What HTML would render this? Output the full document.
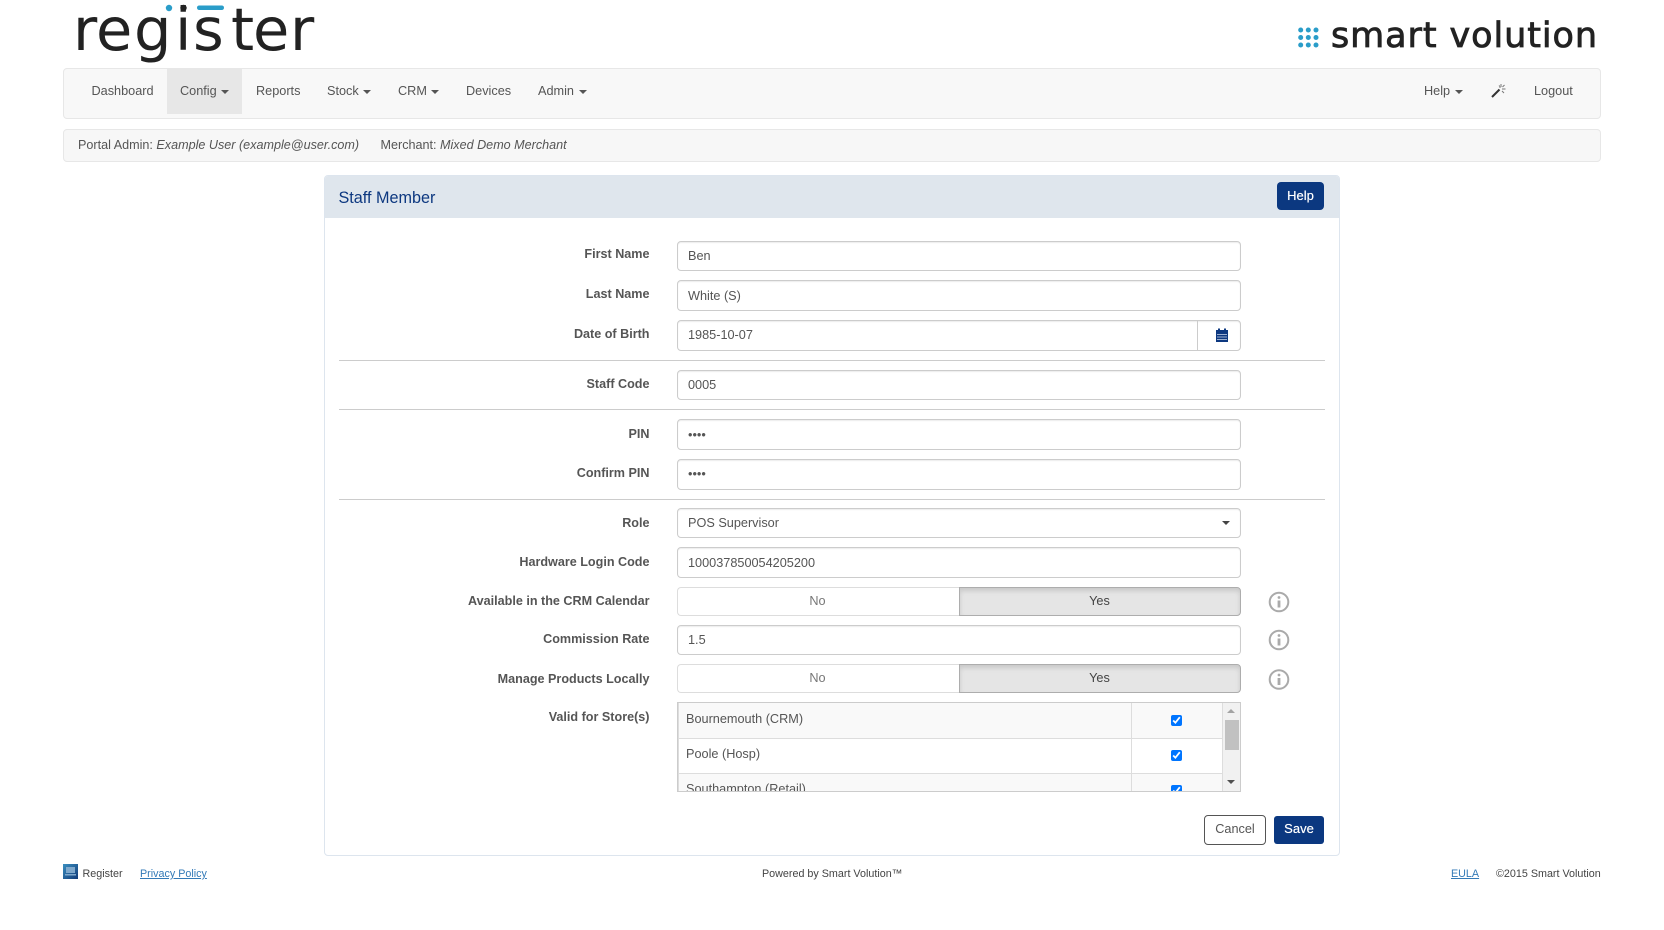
<!DOCTYPE html>
<html lang="en">
<head>
<meta charset="utf-8">
<title>Staff Member</title>
<style>
html,body{margin:0;padding:0;background:#fff;width:1664px;height:930px;overflow:hidden}
body{position:relative;font-family:"Liberation Sans",Arial,sans-serif;font-size:12.6px;color:#555}
.a{position:absolute;box-sizing:border-box}
.t{position:absolute;white-space:nowrap;height:20px;line-height:20px}
.caret{display:inline-block;width:0;height:0;margin-left:1px;vertical-align:middle;border-top:4px solid;border-left:4px solid transparent;border-right:4px solid transparent}
.nav{color:#555;top:81px;font-size:12.7px}
.lab{right:1014.5px;font-weight:bold;color:#555;font-size:12.6px}
.inp{position:absolute;left:677px;width:564px;box-sizing:border-box;background:#fff;border:1px solid #ccc;border-radius:4px;box-shadow:inset 0 1px 1px rgba(0,0,0,.075);padding-left:10px;color:#555;font-size:12.7px}
.hr{position:absolute;left:339px;width:986px;height:1px;background:#ccc}
.no{position:absolute;left:677px;width:282px;height:29px;box-sizing:border-box;border:1px solid #ddd;border-right:0;border-radius:4px 0 0 4px;background:#fff;color:#777;text-align:center;line-height:26px;font-size:12.7px;padding-right:2px}
.yes{position:absolute;left:959px;width:282px;height:29px;box-sizing:border-box;border:1px solid #adadad;border-radius:0 4px 4px 0;background:#e5e5e5;box-shadow:inset 0 3px 5px rgba(0,0,0,.125);color:#444;text-align:center;line-height:26px;font-size:12.7px;padding-right:1px}
.row{position:absolute;left:0;width:544px;height:35px;border-bottom:1px solid #ddd;box-sizing:border-box}
.row span{position:absolute;left:8px;top:5px;line-height:20px;color:#555;font-size:12.7px}
.row i{position:absolute;left:453px;top:0;bottom:-1px;width:1px;background:#ddd}
.row input{position:absolute;left:493px;top:11px;margin:0;width:11px;height:11px}
a{color:#337ab7;text-decoration:underline}
.foot{font-size:10.75px;color:#444;top:864px}
</style>
</head>
<body>

<svg class="a" style="left:0;top:0" width="1664" height="68" viewBox="0 0 1664 68">
  <text y="50" font-family="DejaVu Sans" font-size="59" fill="#222"><tspan x="73">r</tspan><tspan x="96">e</tspan><tspan x="134">g</tspan><tspan x="175">i</tspan><tspan x="193">s</tspan><tspan x="231">t</tspan><tspan x="253">e</tspan><tspan x="290">r</tspan></text>
  <circle cx="169" cy="8" r="3.2" fill="#2a9dc9"/>
  <circle cx="183.5" cy="8" r="3.2" fill="#222"/>
  <rect x="197" y="5.5" width="27" height="4.5" rx="2.2" fill="#2a9dc9"/>
  <text x="1331" y="47" font-family="DejaVu Sans" font-size="35" fill="#222" stroke="#222" stroke-width=".8" textLength="266" lengthAdjust="spacing">smart volution</text>
  <g fill="#2a9dc9">
    <circle cx="1300.7" cy="30" r="2.5"/><circle cx="1308.3" cy="30" r="2.5"/><circle cx="1316" cy="30" r="2.5"/>
    <circle cx="1300.7" cy="37.5" r="2.5"/><circle cx="1308.3" cy="37.5" r="2.5"/><circle cx="1316" cy="37.5" r="2.5"/>
    <circle cx="1300.7" cy="45" r="2.5"/><circle cx="1308.3" cy="45" r="2.5"/><circle cx="1316" cy="45" r="2.5"/>
  </g>
</svg>

<!-- navbar -->
<div class="a" style="left:63px;top:68px;width:1538px;height:51px;background:#f8f8f8;border:1px solid #e7e7e7;border-radius:4px"></div>
<div class="a" style="left:167px;top:69px;width:75px;height:45px;background:#e7e7e7"></div>
<div class="t nav" style="left:91.5px">Dashboard</div>
<div class="t nav" style="left:180px">Config <span class="caret"></span></div>
<div class="t nav" style="left:256px">Reports</div>
<div class="t nav" style="left:327px">Stock <span class="caret"></span></div>
<div class="t nav" style="left:398px">CRM <span class="caret"></span></div>
<div class="t nav" style="left:466px">Devices</div>
<div class="t nav" style="left:538px">Admin <span class="caret"></span></div>
<div class="t nav" style="left:1424px">Help <span class="caret"></span></div>
<svg class="a" style="left:1491px;top:83px" width="15" height="15" viewBox="0 0 15 15">
  <path d="M1 14L8.5 6.5" stroke="#333" stroke-width="2" fill="none"/>
  <path d="M10 1v3M8 2.5l1 1.2M13.5 2l-2 2M11 6h3.5M11 8l2 2M8.5 4.5h1" stroke="#777" stroke-width="1" fill="none"/>
</svg>
<div class="t nav" style="left:1534px">Logout</div>

<!-- breadcrumb -->
<div class="a" style="left:63px;top:129px;width:1538px;height:33px;background:#f7f7f7;border:1px solid #e7e7e7;border-radius:4px"></div>
<div class="t" style="left:78px;top:135px">Portal Admin: <em>Example User (example@user.com)</em></div>
<div class="t" style="left:380.5px;top:135px">Merchant: <em>Mixed Demo Merchant</em></div>

<!-- panel -->
<div class="a" style="left:324px;top:175px;width:1016px;height:681px;background:#fff;border:1px solid #dde5ee;border-radius:4px"></div>
<div class="a" style="left:325px;top:176px;width:1014px;height:42px;background:#dfe6ed;border-radius:3px 3px 0 0"></div>
<div class="t" style="left:338.5px;top:188px;font-size:16.2px;color:#0d3880">Staff Member</div>
<div class="a" style="left:1277px;top:182px;width:47px;height:28px;background:#0b3880;border-radius:4px;color:#fff;text-align:center;line-height:28px;font-size:13px;text-shadow:0 0 .5px #fff">Help</div>

<div class="t lab" style="top:244px">First Name</div>
<div class="inp" style="top:241px;height:30px;line-height:28px">Ben</div>
<div class="t lab" style="top:284px">Last Name</div>
<div class="inp" style="top:280px;height:31px;line-height:31px">White (S)</div>
<div class="t lab" style="top:324px">Date of Birth</div>
<div class="inp" style="top:320px;height:31px;line-height:29px">1985-10-07</div>
<div class="a" style="left:1197px;top:321px;width:1px;height:29px;background:#ccc"></div>
<svg class="a" style="left:1215px;top:328px" width="14" height="14" viewBox="0 0 14 14">
  <rect x="1" y="2" width="12" height="12" fill="#0d3880"/>
  <rect x="3" y="0.5" width="2" height="3" fill="#0d3880"/><rect x="9" y="0.5" width="2" height="3" fill="#0d3880"/>
  <path d="M2 6.5h10M2 9h10M2 11.5h10" stroke="#9db0d0" stroke-width="1"/>
</svg>
<div class="hr" style="top:360px"></div>
<div class="t lab" style="top:374px">Staff Code</div>
<div class="inp" style="top:370px;height:30px;line-height:28px">0005</div>
<div class="hr" style="top:409px"></div>
<div class="t lab" style="top:424px">PIN</div>
<div class="inp" style="top:419px;height:31px;line-height:30px">••••</div>
<div class="t lab" style="top:463px">Confirm PIN</div>
<div class="inp" style="top:459px;height:31px;line-height:28px">••••</div>
<div class="hr" style="top:499px"></div>
<div class="t lab" style="top:513px">Role</div>
<div class="inp" style="top:508px;height:30px;line-height:29px">POS Supervisor</div>
<div class="a" style="left:1221.5px;top:521px;width:0;height:0;border-top:4px solid #444;border-left:4px solid transparent;border-right:4px solid transparent"></div>
<div class="t lab" style="top:552px">Hardware Login Code</div>
<div class="inp" style="top:547px;height:31px;line-height:30px">100037850054205200</div>
<div class="t lab" style="top:591px">Available in the CRM Calendar</div>
<div class="no" style="top:587px">No</div>
<div class="yes" style="top:587px">Yes</div>
<div class="t lab" style="top:629px">Commission Rate</div>
<div class="inp" style="top:625px;height:30px;line-height:28px">1.5</div>
<div class="t lab" style="top:669px">Manage Products Locally</div>
<div class="no" style="top:664px">No</div>
<div class="yes" style="top:664px">Yes</div>

<svg class="a" style="left:1265.5px;top:590px" width="26" height="102" viewBox="0 0 26 102">
  <g fill="none" stroke="#aaa" stroke-width="2">
    <circle cx="13" cy="12" r="9.3"/><circle cx="13" cy="50" r="9.3"/><circle cx="13" cy="89.5" r="9.3"/>
  </g>
  <g fill="#aaa">
    <circle cx="13" cy="7.5" r="1.4"/><rect x="11.6" y="10.5" width="2.8" height="7"/>
    <circle cx="13" cy="45.5" r="1.4"/><rect x="11.6" y="48.5" width="2.8" height="7"/>
    <circle cx="13" cy="85" r="1.4"/><rect x="11.6" y="88" width="2.8" height="7"/>
  </g>
</svg>

<div class="t lab" style="top:707px">Valid for Store(s)</div>
<div class="a" style="left:677px;top:702px;width:564px;height:90px;border:1px solid #ccc;overflow:hidden;background:#fff">
  <div class="a" style="left:0;top:0;width:1px;height:90px;background:#ddd;z-index:2"></div>
  <div class="row" style="top:0;height:36px;background:#f9f9f9"><span style="top:6px">Bournemouth (CRM)</span><i></i><input type="checkbox" checked style="top:12px"></div>
  <div class="row" style="top:36px;background:#fff"><span>Poole (Hosp)</span><i></i><input type="checkbox" checked></div>
  <div class="row" style="top:71px;background:#f9f9f9"><span>Southampton (Retail)</span><i></i><input type="checkbox" checked></div>
  <div class="a" style="left:544px;top:0;width:18px;height:88px;background:#f1f1f1;border-left:1px solid #ddd">
    <div class="a" style="left:2px;top:17px;width:14px;height:30px;background:#c1c1c1"></div>
    <div class="a" style="left:4px;top:6px;width:0;height:0;border-bottom:4px solid #a3a3a3;border-left:4px solid transparent;border-right:4px solid transparent"></div>
    <div class="a" style="left:4px;top:77px;width:0;height:0;border-top:4px solid #505050;border-left:4px solid transparent;border-right:4px solid transparent"></div>
  </div>
</div>

<div class="a" style="left:1204px;top:815px;width:62px;height:30px;background:#fff;border:1px solid #555;border-radius:4px;color:#555;text-align:center;line-height:27px;font-size:12.7px">Cancel</div>
<div class="a" style="left:1274px;top:816px;width:50px;height:28px;background:#0b3880;border-radius:3px;color:#fff;text-align:center;line-height:26px;font-size:13px;text-shadow:0 0 .5px #fff">Save</div>

<!-- footer -->
<svg class="a" style="left:63px;top:864px" width="15" height="15" viewBox="0 0 15 15">
  <defs><linearGradient id="fg" x1="0" y1="0" x2="1" y2="1"><stop offset="0" stop-color="#3a8fc0"/><stop offset="1" stop-color="#123a78"/></linearGradient></defs>
  <rect width="15" height="15" fill="url(#fg)"/>
  <rect x="3" y="3" width="9" height="6" fill="#7fa8cc"/>
  <rect x="2" y="10" width="11" height="1.5" fill="#7fa8cc"/>
</svg>
<div class="t foot" style="left:82.5px">Register</div>
<div class="t foot" style="left:140px"><a href="#">Privacy Policy</a></div>
<div class="t foot" style="left:762px">Powered by Smart Volution™</div>
<div class="t foot" style="left:1451px"><a href="#">EULA</a></div>
<div class="t foot" style="left:1496px">©2015 Smart Volution</div>

</body>
</html>
